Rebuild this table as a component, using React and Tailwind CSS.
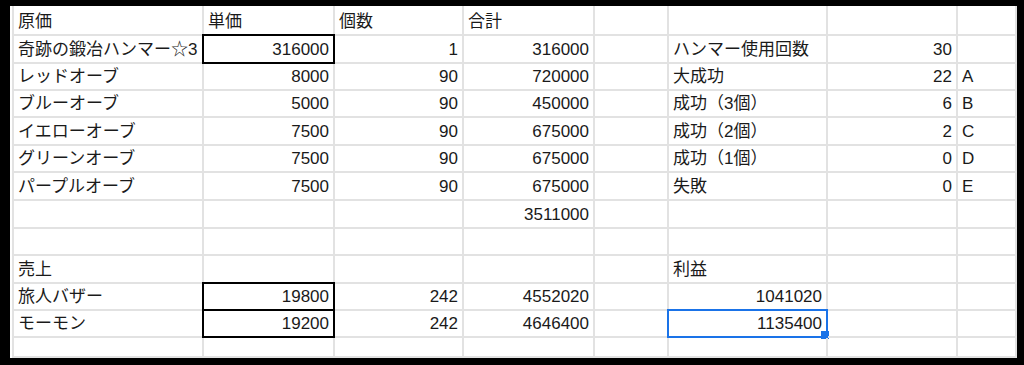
import React from 'react'

// column widths include each column's right gridline
const ROWS = [
  ['原価', '単価', '個数', '合計', '', '', '', ''],
  ['奇跡の鍛冶ハンマー☆3', 316000, 1, 316000, '', 'ハンマー使用回数', 30, ''],
  ['レッドオーブ', 8000, 90, 720000, '', '大成功', 22, 'A'],
  ['ブルーオーブ', 5000, 90, 450000, '', '成功（3個）', 6, 'B'],
  ['イエローオーブ', 7500, 90, 675000, '', '成功（2個）', 2, 'C'],
  ['グリーンオーブ', 7500, 90, 675000, '', '成功（1個）', 0, 'D'],
  ['パープルオーブ', 7500, 90, 675000, '', '失敗', 0, 'E'],
  ['', '', '', 3511000, '', '', '', ''],
  ['', '', '', '', '', '', '', ''],
  ['売上', '', '', '', '', '利益', '', ''],
  ['旅人バザー', 19800, 242, 4552020, '', 1041020, '', ''],
  ['モーモン', 19200, 242, 4646400, '', 1135400, '', ''],
  ['', '', '', '', '', '', '', ''],
]

// cells with a solid black outline
const outlined = new Set(['1-1', '10-1', '11-1'])
const selected = '11-5'

const Cell = ({ value, id }) => {
  const isNum = typeof value === 'number'
  return (
    <div
      className={`relative flex items-end border-r-2 border-b-2 border-[#e2e2e2] px-[4px] pb-[2px] min-w-0 ${
        isNum ? 'justify-end' : 'justify-start'
      }`}
    >
      <span className="whitespace-nowrap leading-[20px]">{value}</span>
      {outlined.has(id) && (
        <div className="absolute -left-[2px] -top-[2px] -right-[2px] -bottom-[2px] border-2 border-black" />
      )}
      {id === selected && (
        <div className="absolute -left-[2px] -top-[2px] -right-[2px] -bottom-[2px] border-2 border-[#1a73e8]">
          <div className="absolute -right-[3px] -bottom-[3px] w-[8px] h-[8px] bg-[#1a73e8]" />
        </div>
      )}
    </div>
  )
}

export default function App() {
  return (
    <div className="w-[1024px] h-[365px] bg-black pt-[6px] pl-[10px] pr-[7px] pb-[7px]">
      <div className="h-full bg-white pl-[2px] overflow-hidden">
        <div
          className="h-full grid grid-cols-[190px_131px_129px_131px_74px_159px_130px_1fr] grid-rows-[30px_28px_27px_27px_28px_27px_28px_28px_27px_28px_27px_27px_1fr] border-l-2 border-[#e2e2e2] text-[17px] text-[#1a1a1a]"
          style={{ fontFamily: '"Liberation Sans", "Noto Sans CJK JP", sans-serif' }}
        >
          {ROWS.map((row, r) =>
            row.map((value, c) => <Cell key={`${r}-${c}`} id={`${r}-${c}`} value={value} />)
          )}
        </div>
      </div>
    </div>
  )
}
